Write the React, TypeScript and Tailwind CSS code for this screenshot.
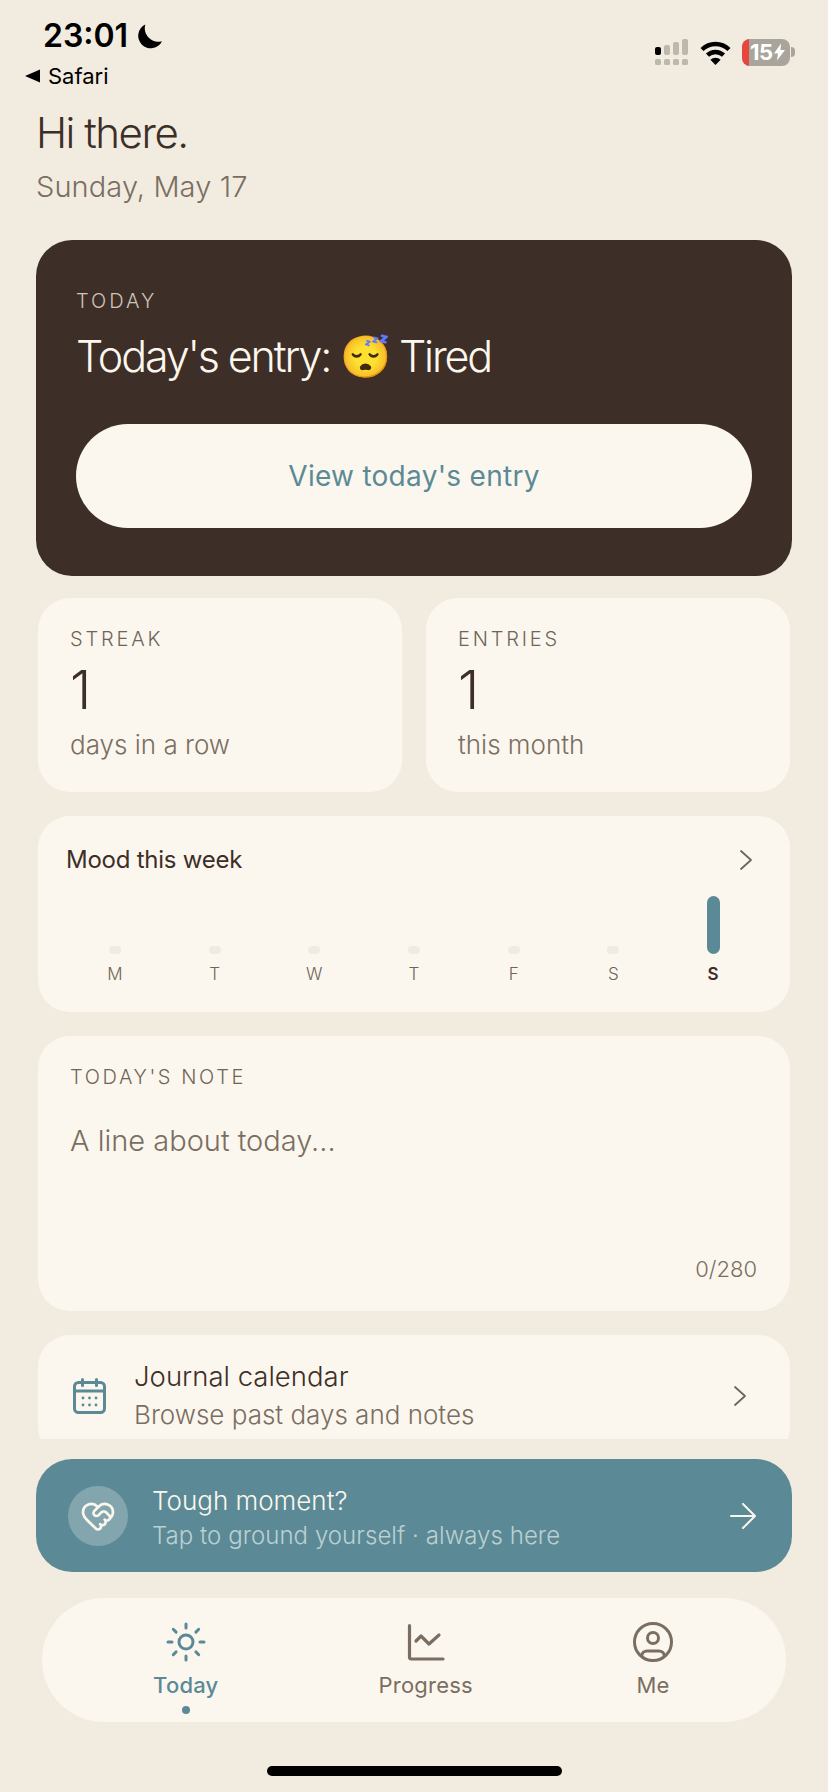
import { HeartHandshake } from 'lucide-react';

const days = ['M', 'T', 'W', 'T', 'F', 'S', 'S'];

const Chevron = ({ className }: { className: string }) => (
  <svg viewBox="0 0 14 22" fill="none" stroke="currentColor" strokeWidth="1.8" strokeLinecap="round" strokeLinejoin="round" className={className}>
    <path d="M2 2l10 9-10 9" />
  </svg>
);

const StatusIcons = () => (
  <div className="flex items-center mt-[16px] mr-[33px]">
    {/* signal */}
    <svg width="33" height="26" viewBox="0 0 33 26" className="mr-[12px]">
      <rect x="0" y="8" width="6" height="8" rx="2" fill="#000" />
      <rect x="9" y="6" width="6" height="10" rx="2" fill="#bdb8ae" />
      <rect x="18" y="3" width="6" height="13" rx="2" fill="#bdb8ae" />
      <rect x="27" y="0" width="6" height="16" rx="2" fill="#bdb8ae" />
      <rect x="0" y="20" width="6" height="6" rx="1.5" fill="#bdb8ae" />
      <rect x="9" y="20" width="6" height="6" rx="1.5" fill="#bdb8ae" />
      <rect x="18" y="20" width="6" height="6" rx="1.5" fill="#bdb8ae" />
      <rect x="27" y="20" width="6" height="6" rx="1.5" fill="#bdb8ae" />
    </svg>
    {/* wifi */}
    <svg width="31" height="25" viewBox="0 0 31 25" fill="none" stroke="#000" className="mr-[11px]">
      <path d="M2 9.5A19.5 19.5 0 0 1 29 9.5" strokeWidth="4.4" />
      <path d="M7.5 15.2A11.5 11.5 0 0 1 23.5 15.2" strokeWidth="4.4" />
      <path d="M15.5 25L10.4 19.8A7.2 7.2 0 0 1 20.6 19.8Z" fill="#000" stroke="none" />
    </svg>
    {/* battery */}
    <div className="flex items-center">
      <div className="flex h-[27px] w-[48px] items-center overflow-hidden rounded-[8px] bg-[#a9a59c]">
        <div className="h-full w-[7px] bg-[#e8453c]" />
        <span className="ml-[1px] text-[22px] leading-[27px] font-bold tracking-[-0.5px] text-white">15</span>
        <svg width="11" height="18" viewBox="0 0 11 17" className="ml-[1px]">
          <path d="M7 0L0 10h4l-1 7 8-10.5H6.5z" fill="#fff" />
        </svg>
      </div>
      <div className="ml-[1px] h-[10px] w-[4px] rounded-r-full bg-[#a9a59c]" />
    </div>
  </div>
);

const StatCard = ({ label, sub }: { label: string; sub: string }) => (
  <div className="rounded-[32px] bg-[#fcf7ee] px-[32px] pt-[29px] pb-[29px]">
    <div className="text-[20px] leading-[24px] font-light tracking-[0.14em] text-[#6f6459]">{label}</div>
    <div className="mt-[9px] text-[54px] leading-[60px] font-light text-[#3d2f27]">1</div>
    <div className="mt-[7px] text-[26px] leading-[36px] font-light text-[#7a6e62]">{sub}</div>
  </div>
);

export default function App() {
  return (
    <div className="flex h-[1792px] w-[828px] flex-col overflow-hidden bg-[#f2ebdf] font-['Inter',sans-serif]">
      <div className="h-[1439px] shrink-0 overflow-hidden px-[38px]">
        {/* status bar */}
        <div className="-mx-[38px] flex justify-between">
          <div>
            <div className="flex items-center pt-[18px] pl-[43px]">
              <span className="text-[32px] leading-[36px] font-semibold text-black">23:01</span>
              <svg width="25" height="25" viewBox="0 0 24 24" className="ml-[9px]">
                <path d="M24 16.5A12 12 0 1 1 8 .5a13 13 0 0 0 16 16Z" fill="#000" />
              </svg>
            </div>
            <div className="mt-[10px] flex items-center pl-[25px]">
              <svg width="15" height="14" viewBox="0 0 15 13">
                <path d="M0 6.5L15 0v13z" fill="#000" />
              </svg>
              <span className="ml-[8px] text-[22px] leading-[24px] font-normal text-black">Safari</span>
            </div>
          </div>
          <StatusIcons />
        </div>

        {/* greeting */}
        <h1 className="mt-[21px] -ml-[2px] text-[42px] leading-[48px] font-light tracking-[-0.035em] text-[#3d2f27]">Hi there.</h1>
        <p className="mt-[12px] -ml-[2px] text-[29px] leading-[36px] font-light tracking-[0.1px] text-[#7a6e62]">Sunday, May 17</p>

        {/* today card */}
        <div className="mt-[35px] -mx-[2px] rounded-[36px] bg-[#3d2f27] px-[40px] pt-[47px] pb-[48px]">
          <div className="text-[20px] leading-[28px] font-light tracking-[0.15em] text-[#cfc5b8]">TODAY</div>
          <div className="mt-[13px] flex items-center text-[43px] leading-[56px] font-light tracking-[-0.05em] text-[#fcf7ee]">
            <span>Today's entry:&nbsp;</span>
            <span className="text-[41px]">😴</span>
            <span>&nbsp;Tired</span>
          </div>
          <div className="mt-[40px] flex h-[104px] items-center justify-center rounded-full bg-[#fcf7ee] text-[28px] font-normal tracking-[0.01em] text-[#5b8a96]">
            View today's entry
          </div>
        </div>

        {/* stats */}
        <div className="mt-[22px] grid grid-cols-2 gap-[24px]">
          <StatCard label="STREAK" sub="days in a row" />
          <StatCard label="ENTRIES" sub="this month" />
        </div>

        {/* mood */}
        <div className="mt-[24px] rounded-[32px] bg-[#fcf7ee] pt-[28px] pr-[27px] pb-[28px] pl-[27px]">
          <div className="flex items-center justify-between pr-[10px] pl-[1px]">
            <span className="text-[24px] leading-[32px] tracking-[-0.01em] text-[#3d2f27]">Mood this week</span>
            <Chevron className="h-[22px] w-[14px] text-[#6f6459]" />
          </div>
          <div className="mt-[20px] grid grid-cols-7">
            {days.map((day, i) => (
              <div key={i} className="flex flex-col items-center">
                <div className="flex h-[58px] items-end">
                  {i === 6 ? (
                    <div className="h-[58px] w-[13px] rounded-full bg-[#5b8a96]" />
                  ) : (
                    <div className="h-[8px] w-[12px] rounded-full bg-[#eeebe1]" />
                  )}
                </div>
                <div className={i === 6 ? 'mt-[10px] text-[17px] leading-[20px] font-semibold text-[#3d2f27]' : 'mt-[10px] text-[17px] leading-[20px] font-light text-[#6f6459]'}>
                  {day}
                </div>
              </div>
            ))}
          </div>
        </div>

        {/* note */}
        <div className="mt-[24px] flex h-[275px] flex-col rounded-[32px] bg-[#fcf7ee] pt-[29px] pr-[33px] pb-[28px] pl-[32px]">
          <div className="text-[20px] leading-[24px] font-light tracking-[0.13em] text-[#6f6459]">TODAY'S NOTE</div>
          <div className="mt-[32px] text-[29px] leading-[40px] font-light text-[#7a6e62]">A line about today...</div>
          <div className="mt-auto text-right text-[22px] leading-[28px] font-light text-[#7a6e62]">0/280</div>
        </div>

        {/* journal */}
        <div className="mt-[24px] flex h-[124px] items-start rounded-[32px] bg-[#fcf7ee] pt-[23px] pr-[43px] pl-[35px]">
          <svg width="33" height="36" viewBox="0 0 33 36" fill="none" stroke="#5b8a96" strokeWidth="3" strokeLinecap="round" className="mt-[20px]">
            <rect x="1.5" y="4.5" width="30" height="30" rx="4" />
            <path d="M1.5 13h30M9.5 1.5v6M23.5 1.5v6" />
            <g fill="#5b8a96" stroke="none">
              <circle cx="10" cy="20" r="1.4" /><circle cx="16.5" cy="20" r="1.4" /><circle cx="23" cy="20" r="1.4" />
              <circle cx="10" cy="27" r="1.4" /><circle cx="16.5" cy="27" r="1.4" /><circle cx="23" cy="27" r="1.4" />
            </g>
          </svg>
          <div className="ml-[28px] flex-1">
            <div className="text-[27.5px] leading-[36px] font-light text-[#3d2f27]">Journal calendar</div>
            <div className="mt-[3px] text-[26px] leading-[36px] font-light text-[#7a6e62]">Browse past days and notes</div>
          </div>
          <Chevron className="mt-[27px] h-[22px] w-[14px] text-[#6f6459]" />
        </div>
      </div>

      {/* tough moment */}
      <div className="mx-[36px] mt-[20px] flex h-[113px] shrink-0 items-center rounded-[36px] bg-[#5b8a96] pr-[36px] pl-[32px]">
        <div className="flex h-[60px] w-[60px] items-center justify-center rounded-full bg-[#83a6ae]">
          <HeartHandshake size={36} strokeWidth={1.8} className="text-[#fcf7ee]" />
        </div>
        <div className="mt-[5px] ml-[24px] flex-1">
          <div className="text-[26px] leading-[32px] font-light text-[#fcf7ee]">Tough moment?</div>
          <div className="mt-[3px] text-[24px] leading-[32px] font-light tracking-[0.05px] text-[#bcd0d2]">Tap to ground yourself · always here</div>
        </div>
        <svg width="26" height="26" viewBox="0 0 26 26" fill="none" stroke="#fcf7ee" strokeWidth="2" strokeLinecap="round" strokeLinejoin="round">
          <path d="M1 13h24M13 1l12 12-12 12" />
        </svg>
      </div>

      {/* nav */}
      <div className="mx-[42px] mt-[26px] flex h-[124px] shrink-0 items-start justify-around rounded-full bg-[#fcf7ee] pt-[24px] pr-[33px] pl-[31px]">
        <div className="flex flex-col items-center">
          <svg width="40" height="40" viewBox="0 0 40 40" fill="none" stroke="#5b8a96" strokeWidth="3" strokeLinecap="round">
            <circle cx="20" cy="20" r="7" />
            <path d="M20 2v4M20 34v4M2 20h4M34 20h4M7.3 7.3l2.8 2.8M29.9 29.9l2.8 2.8M7.3 32.7l2.8-2.8M29.9 10.1l2.8-2.8" />
          </svg>
          <div className="mt-[9px] text-[22px] leading-[28px] font-medium tracking-[0.01em] text-[#5b8a96]">Today</div>
          <div className="mt-[7px] h-[8px] w-[8px] rounded-full bg-[#5b8a96]" />
        </div>
        <div className="flex flex-col items-center">
          <svg width="40" height="40" viewBox="0 0 40 40" fill="none" stroke="#7a6e62" strokeWidth="3.2" strokeLinecap="round" strokeLinejoin="round">
            <path d="M3.5 3.5V35a2 2 0 0 0 2 2H37" />
            <path d="M10 19l5-5 8 8 10-9" />
          </svg>
          <div className="mt-[9px] text-[22px] leading-[28px] font-normal tracking-[0.01em] text-[#7a6e62]">Progress</div>
        </div>
        <div className="flex flex-col items-center">
          <svg width="40" height="40" viewBox="0 0 40 40" fill="none" stroke="#7a6e62" strokeWidth="3" strokeLinecap="round">
            <circle cx="20" cy="20" r="18.5" />
            <circle cx="20" cy="16" r="5.5" />
            <path d="M9 33a5 4 0 0 1 5-4h12a5 4 0 0 1 5 4" />
          </svg>
          <div className="mt-[9px] text-[22px] leading-[28px] font-normal text-[#7a6e62]">Me</div>
        </div>
      </div>

      <div className="mx-auto mt-[44px] h-[10px] w-[295px] shrink-0 rounded-full bg-black" />
    </div>
  );
}
